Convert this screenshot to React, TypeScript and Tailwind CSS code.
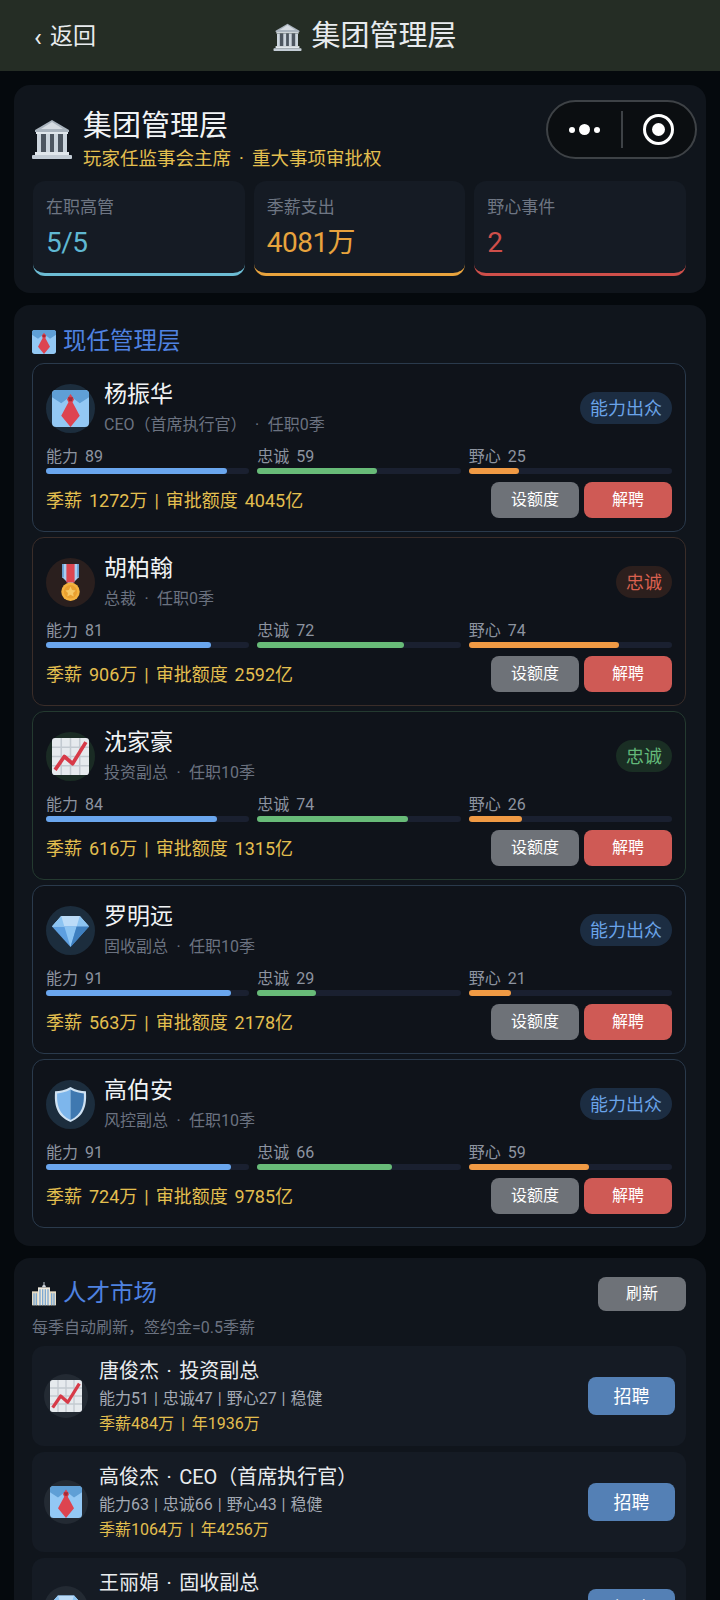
import React from "react";

type IconName = "tie" | "medal" | "chart" | "gem" | "shield";

function BankIcon({ className }: { className?: string }) {
  return (
    <svg viewBox="0 0 40 40" className={className} aria-hidden>
      <path d="M20 1 37 11v2H3v-2z" fill="#a9b3bd" />
      <path d="M20 3 31 10H9z" fill="#d5dbe1" />
      <rect x="4" y="13" width="32" height="2" fill="#e1e7ec" />
      <rect x="5" y="15" width="30" height="18" fill="#4d5660" />
      <rect x="5" y="15" width="4" height="18" fill="#ccd5dd" />
      <rect x="14" y="15" width="4" height="18" fill="#ccd5dd" />
      <rect x="22" y="15" width="4" height="18" fill="#ccd5dd" />
      <rect x="31" y="15" width="4" height="18" fill="#ccd5dd" />
      <rect x="3" y="33" width="34" height="3" fill="#e1e7ec" />
      <rect x="0" y="36" width="40" height="4" rx="1" fill="#c3ccd5" />
    </svg>
  );
}

function TieIcon({ className }: { className?: string }) {
  return (
    <svg viewBox="0 0 36 36" className={className} aria-hidden>
      <rect x="0" y="0" width="36" height="36" rx="4" fill="#93c8f4" />
      <path d="M0 4a4 4 0 0 1 4-4h28a4 4 0 0 1 4 4v3l-9 6-9-7-9 7-9-6z" fill="#5f9fd6" />
      <path d="M18 4l-3.500 5 1.500 3-7 13 9 11 9-11-7-13 1.500-3z" fill="#dd4450" />
      <path d="M15.500 7h5l-1 4h-3z" fill="#a52a36" />
    </svg>
  );
}

function MedalIcon({ className }: { className?: string }) {
  return (
    <svg viewBox="0 0 36 36" className={className} aria-hidden>
      <path d="M10 0h16v13l-8 8-8-8z" fill="#a9cdf0" />
      <path d="M14 0h8v18h-8z" fill="#dc4650" />
      <rect x="10" y="0" width="1.500" height="13" fill="#5f9fd6" />
      <rect x="24.500" y="0" width="1.500" height="13" fill="#5f9fd6" />
      <circle cx="18" cy="27" r="9" fill="#f4b23f" />
      <circle cx="18" cy="27" r="6.500" fill="#e9a030" />
      <path d="m18 22 1.500 3.200 3.500.5-2.500 2.400.6 3.400-3.100-1.600-3.100 1.600.6-3.400-2.500-2.400 3.500-.5z" fill="#f7c865" />
    </svg>
  );
}

function ChartIcon({ className }: { className?: string }) {
  return (
    <svg viewBox="0 0 36 36" className={className} aria-hidden>
      <rect width="36" height="36" rx="3" fill="#e6eaee" />
      <path d="M9 0v36M18 0v36M27 0v36M0 9h36M0 18h36M0 27h36" stroke="#c3cad1" strokeWidth="1.500" />
      <path d="m3 31 9-13 8 7L33 4" fill="none" stroke="#d73a48" strokeWidth="3.600" strokeLinejoin="round" />
    </svg>
  );
}

function GemIcon({ className }: { className?: string }) {
  return (
    <svg viewBox="0 0 36 36" className={className} aria-hidden>
      <path d="M9 4h18l9 10-18 20L0 14z" fill="#5d9fe0" />
      <path d="M9 4h18l9 10H0z" fill="#bcdcf8" />
      <path d="M12 14h12l-6 20z" fill="#8cc4f2" />
      <path d="M9 4 12 14H0zM27 4l-3 10h12z" fill="#8cc4f2" />
      <path d="M24 14h12L18 34z" fill="#3e7fbf" />
    </svg>
  );
}

function ShieldIcon({ className }: { className?: string }) {
  return (
    <svg viewBox="0 0 36 36" className={className} aria-hidden>
      <path d="M18 1c5 3 10 4 15 4 1 13-1 24-15 30C4 29 2 18 3 5c5 0 10-1 15-4z" fill="#cfe2f3" />
      <path d="M18 3.500c-4.500 2.500-9 3.500-13 3.700C4.500 18 6.500 27.500 18 33z" fill="#7db6ec" />
      <path d="M18 3.500c4.500 2.500 9 3.500 13 3.700 .500 10.800-1.500 20.300-13 25.800z" fill="#3f78b0" />
    </svg>
  );
}

function CityIcon({ className }: { className?: string }) {
  return (
    <svg viewBox="0 0 36 36" className={className} aria-hidden>
      <rect x="0" y="14" width="10" height="21" fill="#e6dcc4" />
      <rect x="26" y="14" width="10" height="21" fill="#e6dcc4" />
      <rect x="9" y="8" width="18" height="27" fill="#eee8da" />
      <path d="M15 8a3 4 0 0 1 6 0z" fill="#cfd6dd" />
      <rect x="17.300" y="0" width="1.400" height="5" fill="#cfd6dd" />
      <path d="M12 11v24M16 11v24M20 11v24M24 11v24M3 17v18M6.500 17v18M29.500 17v18M33 17v18" stroke="#7ea9d2" strokeWidth="2" />
    </svg>
  );
}

function RoleIcon({ name, className }: { name: IconName; className?: string }) {
  if (name === "tie") return <TieIcon className={className} />;
  if (name === "medal") return <MedalIcon className={className} />;
  if (name === "chart") return <ChartIcon className={className} />;
  if (name === "gem") return <GemIcon className={className} />;
  return <ShieldIcon className={className} />;
}

const managers = [
  {
    name: "杨振华", sub: "CEO（首席执行官） · 任职0季", icon: "tie" as IconName,
    tag: "能力出众", tagClass: "bg-[#1c2d42] text-[#6aa3e8]",
    border: "border-[#2a3a4c]", avatar: "bg-[#1c2d3d]",
    ability: 89, loyalty: 59, ambition: 25, pay: "季薪 1272万 | 审批额度 4045亿",
  },
  {
    name: "胡柏翰", sub: "总裁 · 任职0季", icon: "medal" as IconName,
    tag: "忠诚", tagClass: "bg-[#2c1f1d] text-[#d8604f]",
    border: "border-[#3a2d29]", avatar: "bg-[#2a1f1e]",
    ability: 81, loyalty: 72, ambition: 74, pay: "季薪 906万 | 审批额度 2592亿",
  },
  {
    name: "沈家豪", sub: "投资副总 · 任职10季", icon: "chart" as IconName,
    tag: "忠诚", tagClass: "bg-[#1a2e24] text-[#63b879]",
    border: "border-[#243a30]", avatar: "bg-[#1a2b24]",
    ability: 84, loyalty: 74, ambition: 26, pay: "季薪 616万 | 审批额度 1315亿",
  },
  {
    name: "罗明远", sub: "固收副总 · 任职10季", icon: "gem" as IconName,
    tag: "能力出众", tagClass: "bg-[#1c2d42] text-[#6aa3e8]",
    border: "border-[#2a3a4c]", avatar: "bg-[#1c2d3d]",
    ability: 91, loyalty: 29, ambition: 21, pay: "季薪 563万 | 审批额度 2178亿",
  },
  {
    name: "高伯安", sub: "风控副总 · 任职10季", icon: "shield" as IconName,
    tag: "能力出众", tagClass: "bg-[#1c2d42] text-[#6aa3e8]",
    border: "border-[#2a3a4c]", avatar: "bg-[#1c2d3d]",
    ability: 91, loyalty: 66, ambition: 59, pay: "季薪 724万 | 审批额度 9785亿",
  },
];

const market = [
  { title: "唐俊杰 · 投资副总", icon: "chart" as IconName, stats: "能力51 | 忠诚47 | 野心27 | 稳健", pay: "季薪484万 | 年1936万" },
  { title: "高俊杰 · CEO（首席执行官）", icon: "tie" as IconName, stats: "能力63 | 忠诚66 | 野心43 | 稳健", pay: "季薪1064万 | 年4256万" },
  { title: "王丽娟 · 固收副总", icon: "gem" as IconName },
];

function Stat({ label, value, valueClass, lineClass }: { label: string; value: string; valueClass: string; lineClass: string }) {
  return (
    <div className={`flex-1 h-[95px] rounded-xl bg-[#151b24] border-b-[3px] px-[13px] pt-[13px] ${lineClass}`}>
      <div className="text-[17px] leading-[26px] text-[#6e7683]">{label}</div>
      <div className={`text-[28px] leading-[36px] mt-[5px] tracking-[-0.5px] ${valueClass}`}>{value}</div>
    </div>
  );
}

function Meter({ label, value, barClass }: { label: string; value: number; barClass: string }) {
  return (
    <div className="flex-1">
      <div className="text-[16px] leading-[22px] text-[#8d94a0] [word-spacing:3px]">{label} {value}</div>
      <div className="h-[6px] rounded-full bg-[#1a2030]">
        <div className={`h-full rounded-full ${barClass}`} style={{ width: `${value}%` }} />
      </div>
    </div>
  );
}

function ManagerCard({ m }: { m: (typeof managers)[number] }) {
  return (
    <div className={`h-[169px] rounded-xl border bg-[#0f131a] px-[13px] pt-[19px] ${m.border}`}>
      <div className="flex items-center h-[50px]">
        <div className={`w-[49px] h-[49px] rounded-full flex items-center justify-center shrink-0 ${m.avatar}`}>
          <RoleIcon name={m.icon} className="w-[37px] h-[37px]" />
        </div>
        <div className="ml-[9px] flex-1">
          <div className="text-[23px] leading-[30px] text-[#f1f3f5]">{m.name}</div>
          <div className="text-[16px] leading-[24px] text-[#6b7280] mt-[3px] [word-spacing:4.500px]">{m.sub}</div>
        </div>
        <div className={`h-[32px] px-[10px] rounded-full flex items-center text-[18px] ${m.tagClass}`}>{m.tag}</div>
      </div>
      <div className="flex gap-[8px] mt-[13px]">
        <Meter label="能力" value={m.ability} barClass="bg-[#6aa6ee]" />
        <Meter label="忠诚" value={m.loyalty} barClass="bg-[#68bb78]" />
        <Meter label="野心" value={m.ambition} barClass="bg-[#f09a44]" />
      </div>
      <div className="flex items-center justify-between mt-[8px]">
        <div className="text-[18px] text-[#e3bf4f] [word-spacing:2.500px]">{m.pay}</div>
        <div className="flex gap-[5px]">
          <button type="button" className="w-[88px] h-[36px] rounded-lg bg-[#6e7278] text-[16px] text-white">设额度</button>
          <button type="button" className="w-[88px] h-[36px] rounded-lg bg-[#cf5a55] text-[16px] text-white">解聘</button>
        </div>
      </div>
    </div>
  );
}

function MarketCard({ c }: { c: (typeof market)[number] }) {
  return (
    <div className="flex items-center min-h-[100px] rounded-xl bg-[#151b24] pl-[12px] pr-[11px]">
      <div className="w-[44px] h-[44px] rounded-full bg-[#232a33] flex items-center justify-center shrink-0">
        <RoleIcon name={c.icon} className="w-[32px] h-[32px]" />
      </div>
      <div className="ml-[11px] flex-1 self-start pt-[11px]">
        <div className="text-[20px] leading-[28px] text-[#e9ecef] [word-spacing:2.500px]">{c.title}</div>
        {c.stats && <div className="text-[16px] leading-[24px] mt-[2px] text-[#a3a9b3] [word-spacing:1px]">{c.stats}</div>}
        {c.pay && <div className="text-[16px] leading-[24px] mt-[1px] text-[#e3bf4f] [word-spacing:3px]">{c.pay}</div>}
      </div>
      <button type="button" className="w-[87px] h-[38px] rounded-lg bg-[#5480b5] text-[18px] text-white shrink-0">招聘</button>
    </div>
  );
}

export default function App() {
  return (
    <div className="relative h-[1600px] overflow-hidden bg-[#05090d] font-['Roboto','Noto_Sans_CJK_SC',sans-serif]">
      <header className="grid grid-cols-[1fr_auto_1fr] items-center h-[71px] bg-[#252d25] px-[34px] pt-[3px] text-[#e8ebee]">
        <div className="flex items-center text-[23px]">
          <span className="w-[16px] text-[26px] leading-none">‹</span>
          <span>返回</span>
        </div>
        <div className="flex items-center gap-[9px] text-[29px] pl-[10px]">
          <BankIcon className="w-[29px] h-[28px]" />
          <span>集团管理层</span>
        </div>
      </header>

      {/* 小程序胶囊 */}
      <div className="absolute left-[546px] top-[100px] w-[151px] h-[59px] rounded-full border-2 border-[#3e4246] bg-[#0b0e11] flex items-center">
        <div className="flex-1 flex items-center justify-center gap-[4px]">
          <span className="w-[6px] h-[6px] rounded-full bg-white" />
          <span className="w-[11px] h-[11px] rounded-full bg-white" />
          <span className="w-[6px] h-[6px] rounded-full bg-white" />
        </div>
        <div className="w-[2px] h-[37px] bg-[#3e4246]" />
        <div className="flex-1 flex items-center justify-center">
          <div className="w-[31px] h-[31px] rounded-full border-[3px] border-white flex items-center justify-center">
            <span className="w-[13px] h-[13px] rounded-full bg-white" />
          </div>
        </div>
      </div>

      <main className="flex flex-col gap-[12px] px-[14px] pt-[14px]">
        <section className="h-[208px] rounded-2xl bg-[#10151c] pl-[19px] pr-[20px] pt-[20px]">
          <div className="flex items-center h-[68px] -ml-[1px]">
            <BankIcon className="w-[40px] h-[40px] shrink-0" />
            <div className="ml-[11px]">
              <div className="text-[29px] leading-[38px] text-[#f1f3f5]">集团管理层</div>
              <div className="text-[18.500px] leading-[26px] mt-[1px] text-[#e3bf4f] [word-spacing:3.500px]">玩家任监事会主席 · 重大事项审批权</div>
            </div>
          </div>
          <div className="flex gap-[9px] mt-[8px]">
            <Stat label="在职高管" value="5/5" valueClass="text-[#5fb8d2]" lineClass="border-[#6cbcd4]" />
            <Stat label="季薪支出" value="4081万" valueClass="text-[#e8a33d]" lineClass="border-[#e8a33d]" />
            <Stat label="野心事件" value="2" valueClass="text-[#cf4f4a]" lineClass="border-[#cf4f4a]" />
          </div>
        </section>

        <section className="h-[941px] rounded-2xl bg-[#10151c] pl-[18px] pr-[20px] pt-[22px]">
          <div className="flex items-center h-[30px] gap-[7px]">
            <TieIcon className="w-[24px] h-[24px]" />
            <h2 className="text-[23.500px] text-[#4f82e0]">现任管理层</h2>
          </div>
          <div className="flex flex-col gap-[5px] mt-[6px]">
            {managers.map((m) => <ManagerCard key={m.name} m={m} />)}
          </div>
        </section>

        <section className="rounded-2xl bg-[#10151c] pl-[18px] pr-[20px] pt-[19px]">
          <div className="flex items-center justify-between h-[34px]">
            <div className="flex items-center gap-[7px]">
              <CityIcon className="w-[24px] h-[24px]" />
              <h2 className="text-[23.500px] text-[#4f82e0]">人才市场</h2>
            </div>
            <button type="button" className="w-[88px] h-[34px] rounded-lg bg-[#6e7278] text-[16px] text-white">刷新</button>
          </div>
          <div className="text-[16px] leading-[24px] mt-[5px] text-[#6b7280]">每季自动刷新，签约金=0.5季薪</div>
          <div className="flex flex-col gap-[6px] mt-[6px]">
            {market.map((c) => <MarketCard key={c.title} c={c} />)}
          </div>
        </section>
      </main>
    </div>
  );
}
